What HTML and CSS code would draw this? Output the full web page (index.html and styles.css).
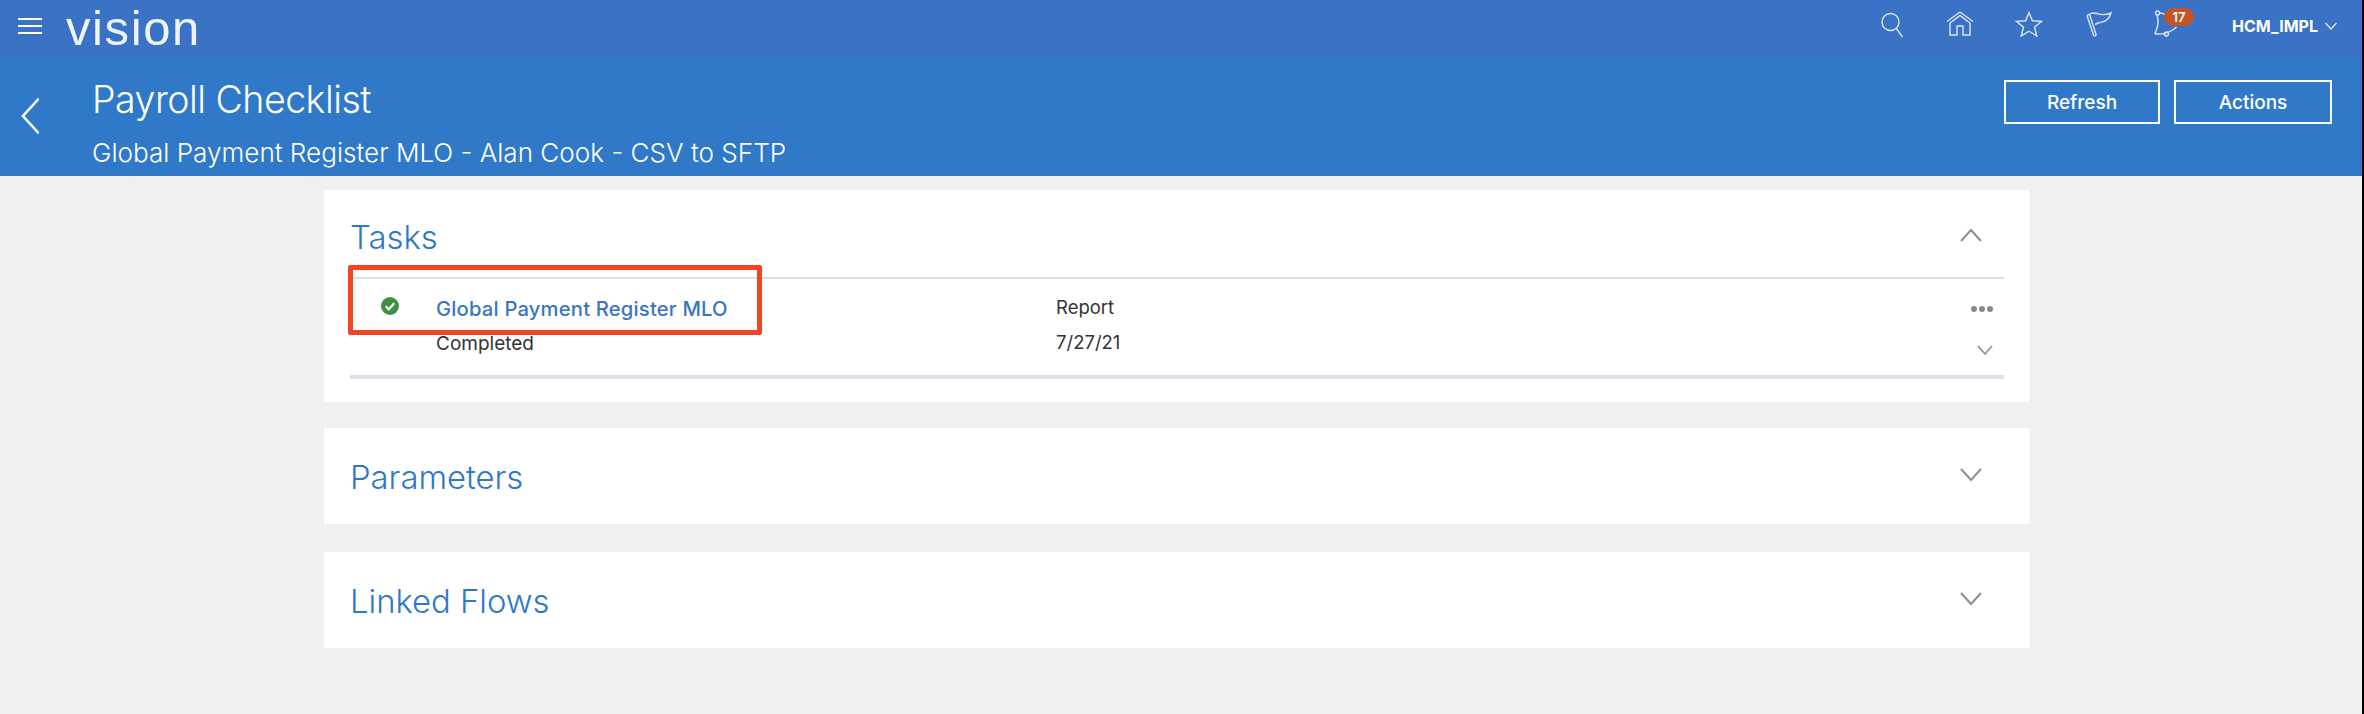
FILE: index.html
```html
<!DOCTYPE html>
<html lang="en">
<head>
    <meta charset="UTF-8" />
    <title>Payroll Checklist</title>
    <link rel="stylesheet" href="styles.css">
</head>
<body>
    <!-- Barra superior -->
    <header class="topbar">
        <svg class="hamburger" width="24" height="16" viewBox="0 0 24 16" aria-hidden="true">
            <path d="M0 1h24M0 8h24M0 15h24" />
        </svg>
        <span class="logo">vision</span>
        <nav class="global-icons">
            <svg class="icono icono-buscar" width="22" height="26" viewBox="0 0 22 26" aria-hidden="true">
                <circle cx="9.500" cy="10" r="8.500" />
                <path d="M15.500 16.500l6 8.500" />
            </svg>
            <svg class="icono icono-casa" width="28" height="25" viewBox="0 0 28 25" aria-hidden="true">
                <path d="M1 10.500L14 1l13 9.500M3.500 12.500L14 4.500l10.500 8M4 12v12h7v-9h6v9h7V12" />
            </svg>
            <svg class="icono icono-estrella" width="28" height="26" viewBox="0 0 28 26" aria-hidden="true">
                <path d="M14 1.500l3.400 8.300 9.100.6-7 5.800 2.300 8.800-7.800-4.800-7.800 4.800 2.300-8.800-7-5.800 9.100-.6z" />
            </svg>
            <svg class="icono icono-bandera" width="26" height="26" viewBox="0 0 26 26" aria-hidden="true">
                <path d="M1 4.500c4-3 7-3 10-2s7 2.500 14-.5c-1 4-3 6-5 7.500s-5 1.500-8 2.500l-3 1.500" />
                <path d="M1 4.500l6.500 19.500c.5 1.500 3 .8 2.500-.8L3.500 3.200" />
            </svg>
            <div class="campana">
                <svg class="icono" width="24" height="28" viewBox="0 0 24 28" aria-hidden="true">
                    <circle cx="3.500" cy="3" r="2" />
                    <circle cx="12.500" cy="24" r="2" />
                    <path d="M3 5c1.500 4 1 8 .5 11S1.500 22 1 23.500c4 1.500 14 .5 21.500-6.500M5.500 3c5 0 8 3 10 6" />
                </svg>
                <span class="badge">17</span>
            </div>
            <div class="usuario">
                HCM_IMPL
                <svg class="icono" width="12" height="8" viewBox="0 0 12 8" aria-hidden="true">
                    <path d="M.5 1L6 7l5.500-6" />
                </svg>
            </div>
        </nav>
    </header>

    <!-- Cabecera de la pagina -->
    <section class="page-header">
        <svg class="volver" width="18" height="36" viewBox="0 0 18 36" aria-hidden="true">
            <path d="M17 1.500L2 18l15 16.500" />
        </svg>
        <div class="titulos">
            <h1>Payroll Checklist</h1>
            <h2>Global Payment Register MLO - Alan Cook - CSV to SFTP</h2>
        </div>
        <div class="acciones">
            <button class="boton boton-refresh">Refresh</button>
            <button class="boton boton-actions">Actions</button>
        </div>
    </section>

    <main class="contenido">
        <section class="card card-tasks">
            <div class="card-head">
                <h3>Tasks</h3>
                <svg class="flecha" width="22" height="14" viewBox="0 0 22 14" aria-hidden="true">
                    <path d="M1 13L11 2l10 11" />
                </svg>
            </div>
            <div class="task-row">
                <svg class="check" width="18" height="18" viewBox="0 0 18 18" aria-hidden="true">
                    <circle cx="9" cy="9" r="9" />
                    <path d="M4.800 9.300l3 3 5.400-6" />
                </svg>
                <div class="task-name">
                    <a class="task-link">Global Payment Register MLO</a>
                    <span>Completed</span>
                </div>
                <div class="task-info">
                    <span>Report</span>
                    <span>7/27/21</span>
                </div>
                <div class="task-tools">
                    <div class="puntos"><i></i><i></i><i></i></div>
                    <svg class="flecha-chica" width="16" height="10" viewBox="0 0 16 10" aria-hidden="true">
                        <path d="M1 1l7 8 7-8" />
                    </svg>
                </div>
            </div>
            <!-- Recuadro rojo de la captura -->
            <div class="marca-roja"></div>
        </section>

        <section class="card card-param">
            <div class="card-head">
                <h3>Parameters</h3>
                <svg class="flecha" width="22" height="14" viewBox="0 0 22 14" aria-hidden="true">
                    <path d="M1 1l10 11L21 1" />
                </svg>
            </div>
        </section>

        <section class="card card-flows">
            <div class="card-head">
                <h3>Linked Flows</h3>
                <svg class="flecha" width="22" height="14" viewBox="0 0 22 14" aria-hidden="true">
                    <path d="M1 1l10 11L21 1" />
                </svg>
            </div>
        </section>
    </main>
</body>
</html>
```

FILE: styles.css
```css
html {
    background-color: #000;
}
body {
    font-family: 'Inter', 'Liberation Sans', sans-serif;
    background-color: #f0f0f0;
    color: #333;
    margin: 0 2px 0 0;
    height: 714px;
    overflow: hidden;
}
h1, h2, h3 {
    margin: 0;
}

/* Barra superior */
.topbar {
    height: 56px;
    background-color: #3a72c6;
    display: flex;
    align-items: center;
    padding: 0 25px 0 18px;
    color: #fff;
}
.hamburger {
    margin-top: -4px;
}
.hamburger path {
    fill: none;
    stroke: #fff;
    stroke-width: 2;
}
.logo {
    font-family: 'Liberation Sans', sans-serif;
    font-size: 49px;
    line-height: normal;
    margin-left: 24px;
    align-self: flex-start;
    letter-spacing: 1.6px;
    opacity: 0.92;
}
.global-icons {
    margin-left: auto;
    display: flex;
    align-items: center;
}
.icono {
    fill: none;
    stroke: #dbe6f6;
    stroke-width: 1.4;
    display: block;
}
.icono-buscar {
    margin-right: 43px;
    margin-top: -7px;
}
.icono-casa {
    margin-right: 41px;
    margin-top: -10px;
}
.icono-estrella {
    margin-right: 43px;
    margin-top: -8px;
}
.icono-bandera {
    margin-right: 42px;
    margin-top: -8px;
}
.campana {
    position: relative;
    margin-right: 54px;
    margin-top: -8px;
}
.badge {
    position: absolute;
    left: 10px;
    top: -2px;
    width: 30px;
    height: 18px;
    border-radius: 9px;
    background-color: #c25525;
    color: #fff;
    font-size: 13px;
    font-weight: 600;
    line-height: 18px;
    text-align: center;
}
.usuario {
    display: flex;
    align-items: center;
    gap: 7px;
    font-size: 16px;
    font-weight: 700;
    margin-top: -5px;
}

/* Cabecera de la pagina */
.page-header {
    height: 120px;
    background-color: #2f79c8;
    color: #fff;
    display: flex;
    padding-left: 21px;
    padding-right: 30px;
}
.volver {
    margin-top: 42px;
    fill: none;
    stroke: #fff;
    stroke-width: 2.6;
    stroke-linecap: round;
}
.titulos {
    margin-left: 53px;
}
.titulos h1 {
    font-size: 37.500px;
    font-weight: 300;
    line-height: 44px;
    margin-top: 22px;
    letter-spacing: -0.5px;
}
.titulos h2 {
    font-size: 26.100px;
    font-weight: 300;
    line-height: 30px;
    margin-top: 16px;
}
.acciones {
    margin-left: auto;
    display: flex;
    gap: 14px;
    padding-top: 24px;
}
.boton {
    height: 44px;
    background-color: transparent;
    color: #fff;
    border: 2px solid #fff;
    font-family: 'Inter', sans-serif;
    font-size: 19px;
    font-weight: 500;
    padding: 0;
    box-sizing: border-box;
}
.boton-refresh {
    width: 156px;
}
.boton-actions {
    width: 158px;
}

/* Tarjetas */
.contenido {
    width: 1706px;
    margin-left: 324px;
    padding-top: 14px;
    display: flex;
    flex-direction: column;
}
.card {
    background-color: #fff;
    position: relative;
    box-sizing: border-box;
    padding: 0 26px;
}
.card-tasks {
    height: 212px;
    margin-bottom: 26px;
}
.card-param {
    height: 96px;
    margin-bottom: 28px;
}
.card-flows {
    height: 96px;
}
.card-head {
    display: flex;
    align-items: center;
    justify-content: space-between;
    height: 96px;
    padding-right: 22px;
}
.card-tasks .card-head {
    height: 87px;
    border-bottom: 2px solid #d9e0e8;
}
.card-tasks h3 {
    padding-top: 6px;
}
.card-tasks .flecha {
    margin-top: 2px;
}
.card h3 {
    font-size: 32.800px;
    font-weight: 300;
    color: #2f78c8;
    margin-top: 1px;
}
.flecha {
    fill: none;
    stroke: #8a8f96;
    stroke-width: 2;
    margin-top: -2px;
}

/* Fila de la tarea */
.task-row {
    display: flex;
    height: 96px;
    border-bottom: 4px solid #d9e0e8;
    font-size: 19px;
}
.check {
    margin: 18px 0 0 31px;
}
.check circle {
    fill: #3f9142;
}
.check path {
    fill: none;
    stroke: #fff;
    stroke-width: 2.2;
}
.task-name {
    display: flex;
    flex-direction: column;
    margin-left: 37px;
    width: 620px;
    padding-top: 18px;
    line-height: 24px;
    gap: 11px;
}
.task-link {
    color: #3a74c4;
    font-size: 20.200px;
    font-weight: 500;
    letter-spacing: 0.2px;
}
.task-info {
    display: flex;
    flex-direction: column;
    padding-top: 16px;
    line-height: 24px;
    gap: 11px;
    font-size: 18.500px;
}
.task-tools {
    margin-left: auto;
    display: flex;
    flex-direction: column;
    align-items: flex-end;
    padding: 27px 11px 0 0;
}
.puntos {
    display: flex;
    gap: 2px;
}
.puntos i {
    width: 6px;
    height: 6px;
    border-radius: 50%;
    background-color: #85898f;
}
.flecha-chica {
    margin-top: 33px;
    fill: none;
    stroke: #8a8f96;
    stroke-width: 1.6;
}
.marca-roja {
    position: absolute;
    left: 24px;
    top: 75px;
    width: 414px;
    height: 70px;
    box-sizing: border-box;
    border: 5px solid #f34423;
    border-radius: 2px;
}
```
